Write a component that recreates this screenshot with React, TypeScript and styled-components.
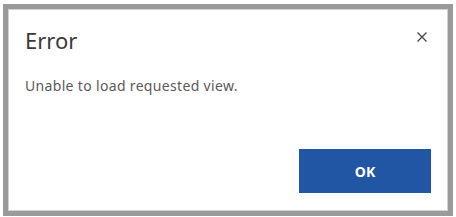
import React from "react";
import styled, { createGlobalStyle } from "styled-components";

const Global = createGlobalStyle`
  html, body { margin: 0; padding: 0; background: #ffffff; }
  body { font-family: "Noto Sans", "Open Sans", sans-serif; }
  * { box-sizing: border-box; }
`;

const Frame = styled.div`
  margin: 4px 3px 1px 3px;
  height: 212px;
  border: 5px solid #9a9a9a;
  background: #ffffff;
  box-shadow: inset 0 0 0 1px #d2d2d2;
  display: flex;
  flex-direction: column;
`;

const Header = styled.div`
  display: flex;
  justify-content: space-between;
  align-items: flex-start;
  padding: 17px 18px 0 17px;
`;

const Title = styled.h1`
  margin: 0;
  font-size: 22px;
  line-height: 28px;
  font-weight: 400;
  color: #3a3a3a;
`;

const CloseButton = styled.button`
  margin-top: 3px;
  width: 16px;
  height: 16px;
  padding: 0;
  border: none;
  background: transparent;
  display: flex;
  align-items: center;
  justify-content: center;
  cursor: pointer;
`;

const Body = styled.p`
  margin: 22px 0 0 0;
  padding: 0 17px;
  font-size: 14px;
  line-height: 20px;
  letter-spacing: 0.33px;
  color: #5a5a5a;
`;

const Footer = styled.div`
  margin-top: auto;
  display: flex;
  justify-content: flex-end;
  padding: 0 17px 18px 0;
`;

const OkButton = styled.button`
  width: 132px;
  height: 44px;
  border: none;
  background: #2056a3;
  color: #ffffff;
  font-family: "Noto Sans", "Open Sans", sans-serif;
  font-weight: 700;
  font-size: 14px;
  cursor: pointer;
`;

export default function App() {
  return (
    <>
      <Global />
      <Frame>
        <Header>
          <Title>Error</Title>
          <CloseButton aria-label="Close">
            <svg width="10" height="10" viewBox="0 0 10 10">
              <path d="M0.5 0.5 L9.5 9.5 M9.5 0.5 L0.5 9.5" stroke="#454545" strokeWidth="1.3" />
            </svg>
          </CloseButton>
        </Header>
        <Body>Unable to load requested view.</Body>
        <Footer>
          <OkButton>OK</OkButton>
        </Footer>
      </Frame>
    </>
  );
}
